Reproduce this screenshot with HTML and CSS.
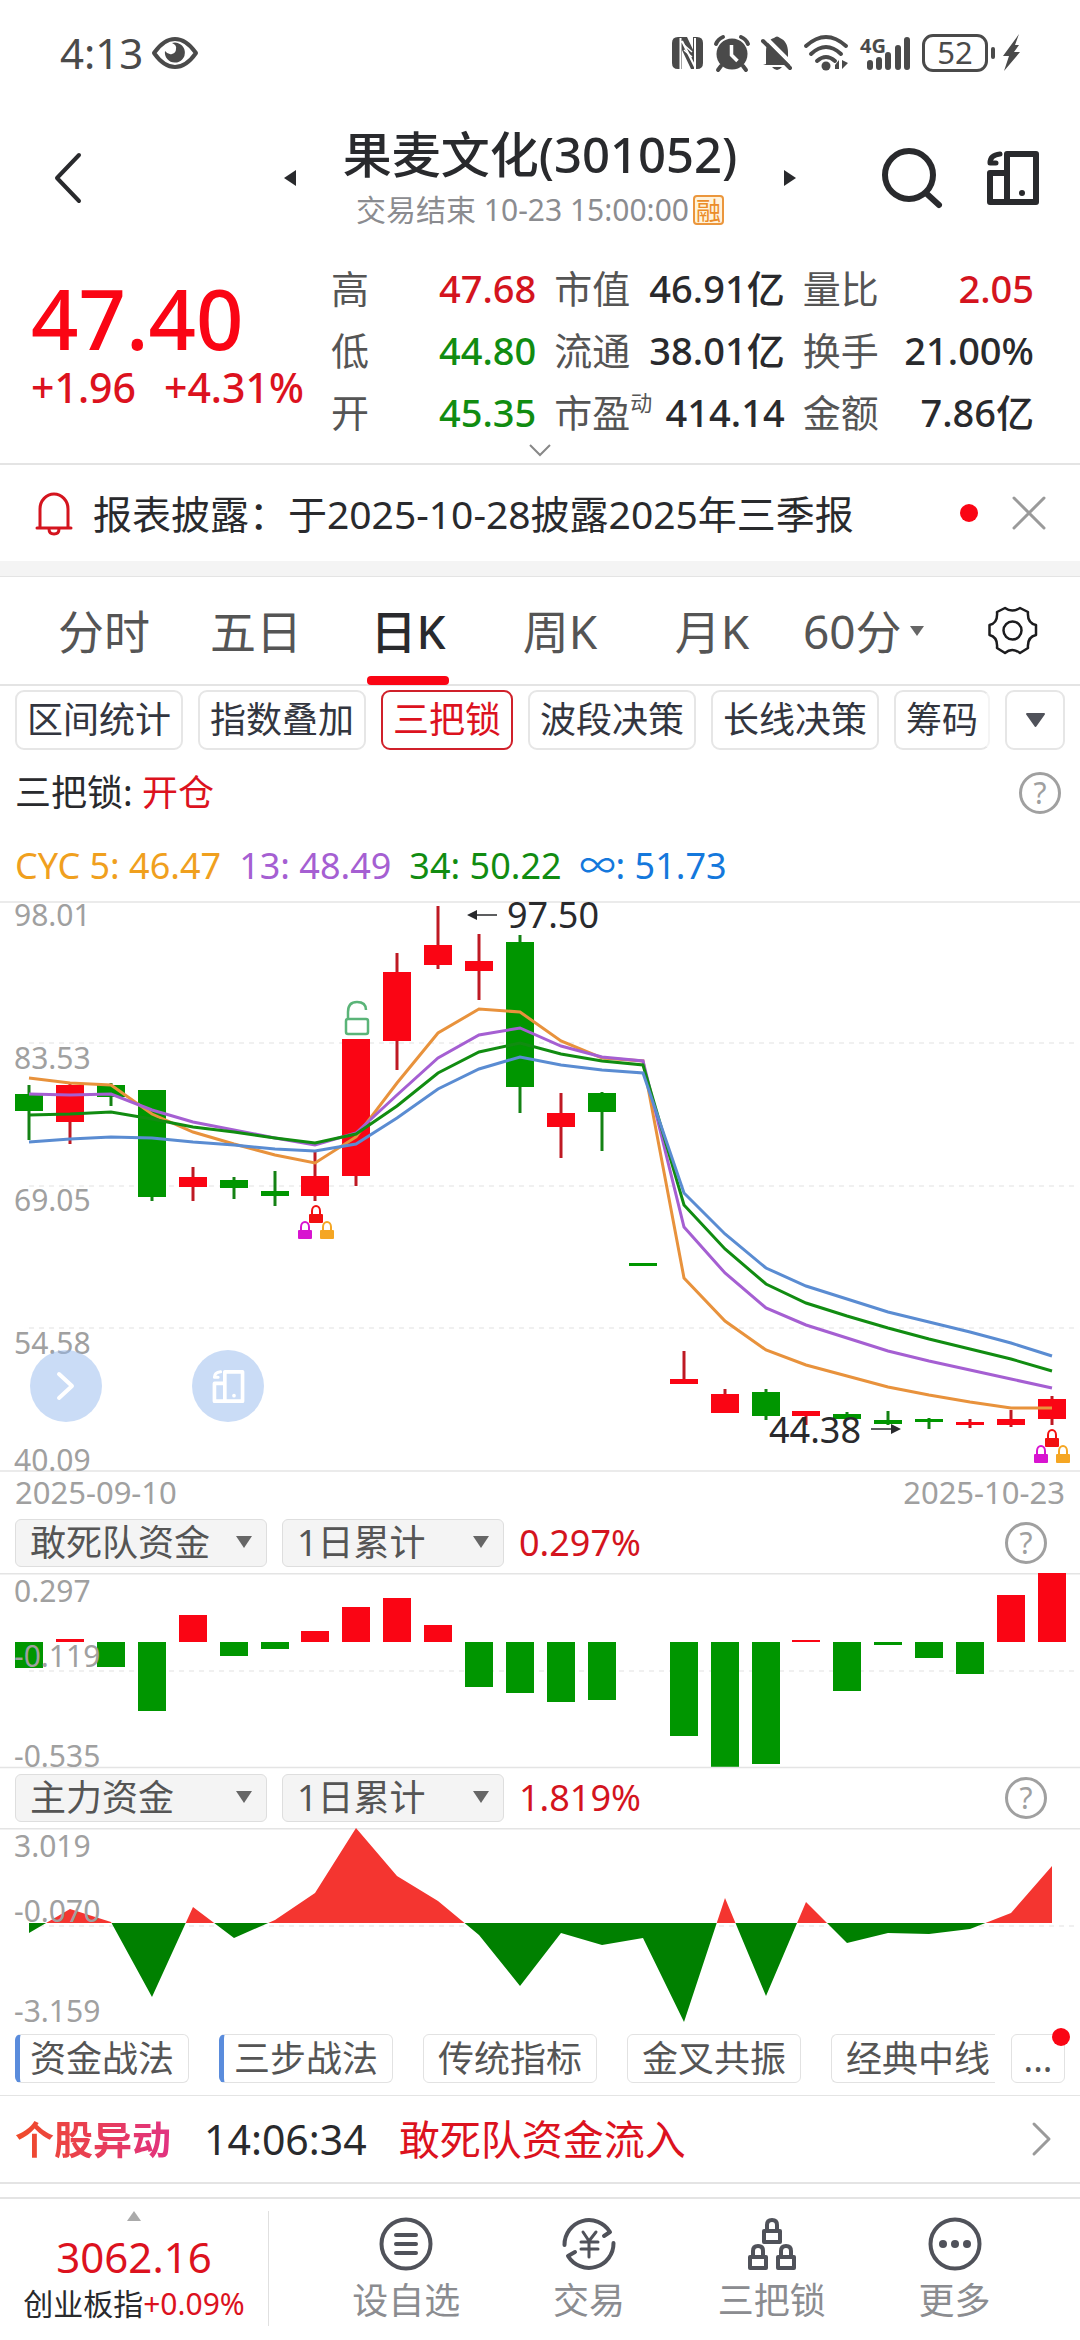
FILE: index.html
```html
<!DOCTYPE html>
<html lang="zh-CN">
<head>
<meta charset="utf-8">
<meta name="viewport" content="width=device-width">
<title>果麦文化(301052)</title>
<link rel="stylesheet" href="styles.css">
</head>
<body>
<div class="status">
  <span class="status-time">4:13</span>
  <svg width="46" height="34" viewBox="0 0 46 34" fill="none" stroke="#4a4a4a" stroke-width="4" stroke-linejoin="round"><path d="M2 17C9 7 15 3 23 3s14 4 21 14C37 27 31 31 23 31S9 27 2 17z"/><path d="M20 7A10 10 0 1 1 13 15Q16 19 20 18T24 13Q25 9 20 7z" fill="#4a4a4a" stroke="none"/></svg>
  <div class="status-icons">
    <svg width="31" height="34" viewBox="0 0 31 34"><path d="M6 1h4v32H6q-6 0-6-6V7q0-6 6-6zM21 1h4q6 0 6 6v20q0 6-6 6h-4zM10 1h5l9 19v13h-5l-9-19z" fill="#4a4a4a"/><path d="M8.500 2v31M10 5l13 26M23 2v31" stroke="#fff" stroke-width="2" fill="none"/><path d="M12 14l8 7M12 9l8 7" stroke="#fff" stroke-width="1.500"/></svg>
    <svg width="36" height="36" viewBox="0 0 36 36"><circle cx="18" cy="19" r="15.500" fill="#4a4a4a"/><path d="M2 9q2-5 7-7M34 9q-2-5-7-7M7 31l-3 4M29 31l3 4" stroke="#4a4a4a" stroke-width="4" stroke-linecap="round" fill="none"/><path d="M17.500 10v10l6 6" stroke="#fff" stroke-width="3.500" fill="none"/></svg>
    <svg width="32" height="36" viewBox="0 0 32 36"><path d="M5 29V17C5 8 9 4 13 3q3-3 6 0c5 2 8 7 8 14v6l2 5v2H2z" fill="#4a4a4a"/><path d="M11 32h10q-5 6-10 0z" fill="#4a4a4a"/><path d="M5 3l28 28" stroke="#fff" stroke-width="4"/><path d="M2 6l27 27" stroke="#4a4a4a" stroke-width="4" stroke-linecap="round"/></svg>
    <svg width="45" height="36" viewBox="0 0 45 36" fill="none" stroke="#4a4a4a" stroke-width="4" stroke-linecap="round"><path d="M2 11Q22-7 42 11M7 19q15-14 30 0M13 26q9-8 18 0"/><circle cx="22" cy="31" r="4.500" fill="#4a4a4a" stroke="none"/><path d="M31 30l4-5v9h-4zM38 25v9l6-6z" fill="#4a4a4a" stroke="none"/></svg>
    <svg width="51" height="36" viewBox="0 0 51 36" stroke="#4a4a4a" stroke-width="6" stroke-linecap="round"><path d="M10 28v4M19 25v7M28 20v12M38 13v19M47 5v27"/><text x="0" y="18" class="net">4G</text></svg>
    <span class="battery">52</span>
    <svg width="17" height="38" viewBox="0 0 17 38"><path d="M16 0L0 22h6L1 37 17 18h-6l5-7h-4z" fill="#4a4a4a"/></svg>
  </div>
</div>

<header class="header">
  <button class="plain back" aria-label="返回"><svg width="28" height="52" viewBox="0 0 28 52" fill="none" stroke="#292a2d" stroke-width="4" stroke-linecap="round" stroke-linejoin="round"><path d="M25 3L3 26l22 23"/></svg></button>
  <div class="switcher">
    <button class="plain" aria-label="上一只"><svg width="13" height="18" viewBox="0 0 13 18"><path d="M12 1v16L0 9z" fill="#292a2d"/></svg></button>
    <div class="titles">
      <h1 class="title">果麦文化(301052)</h1>
      <p class="subtitle">交易结束 10-23 15:00:00<span class="margin-tag">融</span></p>
    </div>
    <button class="plain" aria-label="下一只"><svg width="13" height="18" viewBox="0 0 13 18"><path d="M1 1v16l12-8z" fill="#292a2d"/></svg></button>
  </div>
  <div class="header-tools">
    <button class="plain" aria-label="搜索"><svg width="60" height="60" viewBox="0 0 60 60" fill="none" stroke="#292a2d" stroke-width="6" stroke-linecap="round"><circle cx="27" cy="27" r="24"/><path d="M45 46l12 11"/></svg></button>
    <button class="plain" aria-label="横屏"><svg width="54" height="54" viewBox="0 0 54 54"><use href="#rotate" color="#292a2d"/></svg></button>
  </div>
</header>

<section class="quote">
  <div class="quote-main">
    <div class="price">47.40</div>
    <div class="change"><span>+1.96</span><span>+4.31%</span></div>
  </div>
  <dl class="stats">
    <div class="stat"><dt>高</dt><dd class="up">47.68</dd></div>
    <div class="stat"><dt>市值</dt><dd>46.91亿</dd></div>
    <div class="stat"><dt>量比</dt><dd class="up">2.05</dd></div>
    <div class="stat"><dt>低</dt><dd class="down">44.80</dd></div>
    <div class="stat"><dt>流通</dt><dd>38.01亿</dd></div>
    <div class="stat"><dt>换手</dt><dd>21.00%</dd></div>
    <div class="stat"><dt>开</dt><dd class="down">45.35</dd></div>
    <div class="stat"><dt>市盈<sup>动</sup></dt><dd>414.14</dd></div>
    <div class="stat"><dt>金额</dt><dd>7.86亿</dd></div>
  </dl>
  <button class="plain expand" aria-label="展开"><svg width="22" height="13" viewBox="0 0 22 13" fill="none" stroke="#888" stroke-width="2"><path d="M1 1l10 10L21 1"/></svg></button>
</section>

<section class="notice">
  <svg width="38" height="44" viewBox="0 0 38 44" fill="none" stroke="#d4141e" stroke-width="3" stroke-linecap="round"><path d="M2 37h34M5 36V18a14 15 0 0 1 28 0v18M14 38q0 5 5 5t5-5"/></svg>
  <p class="notice-text">报表披露：于2025-10-28披露2025年三季报</p>
  <span class="dot"></span>
  <button class="plain" aria-label="关闭"><svg width="34" height="34" viewBox="0 0 34 34" stroke="#9a9a9a" stroke-width="3" stroke-linecap="round"><path d="M2 2l30 30M32 2L2 32"/></svg></button>
</section>
<div class="band"></div>

<nav class="tabs">
  <button class="tab">分时</button><button class="tab">五日</button><button class="tab tab-on">日K</button><button class="tab">周K</button><button class="tab">月K</button><button class="tab tab-more">60分</button>
  <button class="plain gear" aria-label="设置"><svg width="49" height="49" viewBox="0 0 49 49" fill="none" stroke="#1c1c1e" stroke-width="2.500" stroke-linejoin="round"><path d="M17 2Q24 7 32 2L40 6Q39 17 48 19V29Q39 31 40 42L32 47Q24 41 17 47L9 42Q10 31 1.500 29V19Q10 17 9 6z"/><circle cx="24.500" cy="24.500" r="9"/></svg></button>
</nav>

<div class="chips">
  <button class="chip">区间统计</button><button class="chip">指数叠加</button><button class="chip chip-on">三把锁</button><button class="chip">波段决策</button><button class="chip">长线决策</button><button class="chip chip-fade">筹码</button>
  <button class="chip chip-more" aria-label="更多指标"><svg width="21" height="16" viewBox="0 0 21 16"><path d="M2 2h17l-8.500 12z" fill="#50525a" stroke="#50525a" stroke-width="2" stroke-linejoin="round"/></svg></button>
</div>
<div class="signal"><span>三把锁: <b class="signal-value">开仓</b></span><button class="help" aria-label="帮助">?</button></div>
<div class="legend"><span class="c5">CYC 5: 46.47</span><span class="c13">13: 48.49</span><span class="c34">34: 50.22</span><span class="cinf">∞: 51.73</span></div>

<section class="kline">
  <svg id="kline" class="plot" viewBox="0 0 1080 571"></svg>
  <button class="float float-next" aria-label="展开面板"><svg width="20" height="30" viewBox="0 0 20 30" fill="none" stroke="#fff" stroke-width="4" stroke-linecap="round" stroke-linejoin="round"><path d="M3 3l13 12L3 27"/></svg></button>
  <button class="float float-rotate" aria-label="横屏"><svg width="33" height="33" viewBox="0 0 54 54"><use href="#rotate" color="#fff"/></svg></button>
</section>
<div class="dates"><span>2025-09-10</span><span>2025-10-23</span></div>

<div class="panel-head">
  <label class="pick pick-wide"><select aria-label="指标"><option>敢死队资金</option></select></label>
  <label class="pick"><select aria-label="周期"><option>1日累计</option></select></label>
  <span class="pick-value">0.297%</span><button class="help" aria-label="帮助">?</button>
</div>
<svg id="bars" class="plot" viewBox="0 0 1080 195"></svg>
<div class="panel-head">
  <label class="pick pick-wide"><select aria-label="指标"><option>主力资金</option></select></label>
  <label class="pick"><select aria-label="周期"><option>1日累计</option></select></label>
  <span class="pick-value">1.819%</span><button class="help" aria-label="帮助">?</button>
</div>
<svg id="area" class="plot" viewBox="0 0 1080 196"></svg>

<div class="tactics">
  <div class="tactic-list">
    <button class="tactic tactic-mark">资金战法</button><button class="tactic tactic-mark">三步战法</button><button class="tactic">传统指标</button><button class="tactic">金叉共振</button><button class="tactic tactic-fade">经典中线</button>
  </div>
  <button class="tactic tactic-more">...<span class="dot badge"></span></button>
</div>

<a class="alert" href="#alert">
  <b class="alert-tag">个股异动</b><span>14:06:34</span><span class="alert-text">敢死队资金流入</span>
  <svg width="20" height="34" viewBox="0 0 20 34" fill="none" stroke="#9a9a9a" stroke-width="3" stroke-linecap="round" stroke-linejoin="round"><path d="M2 2l15 15L2 32"/></svg>
</a>

<footer class="bottom">
  <a class="index" href="#index">
    <svg width="14" height="10" viewBox="0 0 14 10"><path d="M7 0l7 10H0z" fill="#aaa"/></svg>
    <span class="index-value">3062.16</span>
    <span class="index-name">创业板指<span class="index-change">+0.09%</span></span>
  </a>
  <nav class="actions">
    <a class="action" href="#watch"><svg width="54" height="54" viewBox="0 0 54 54" fill="none" stroke="#50525a" stroke-width="4" stroke-linecap="round"><circle cx="27" cy="27" r="24.500"/><path d="M17 18h20M17 27h20M17 36h20"/></svg>设自选</a>
    <a class="action" href="#trade"><svg width="54" height="54" viewBox="0 0 54 54" fill="none" stroke="#50525a" stroke-width="4" stroke-linecap="round" stroke-linejoin="round"><path d="M2.500 28A24.500 24.500 0 0 1 48 15l-6 4M51.500 26A24.500 24.500 0 0 1 6 39l7-4"/><path d="M21 15l6 9 7-9M27 25v15M19 25h17M19 32h17" stroke-width="3"/></svg>交易</a>
    <a class="action" href="#locks"><svg width="54" height="54" viewBox="0 0 54 54" fill="none" stroke="#50525a" stroke-width="4" stroke-linejoin="round"><path d="M19 14h16v11H19zM22 14V8q0-5 5-5t5 5v6M5 40h16v11H5zM8 40v-6q0-5 5-5t5 5v6M33 40h16v11H33zM36 40v-6q0-5 5-5t5 5v6"/></svg>三把锁</a>
    <a class="action" href="#more"><svg width="54" height="54" viewBox="0 0 54 54" fill="#50525a"><circle cx="27" cy="27" r="24.500" fill="none" stroke="#50525a" stroke-width="4"/><circle cx="15" cy="27" r="4"/><circle cx="27" cy="27" r="4"/><circle cx="39" cy="27" r="4"/></svg>更多</a>
  </nav>
</footer>

<svg class="defs" aria-hidden="true"><defs>
  <g id="rotate" fill="none" stroke="currentColor" stroke-width="6" stroke-linejoin="round">
    <path d="M21 3h29v48H21zM21 22H4v29h17"/><circle cx="36" cy="42" r="3" fill="currentColor" stroke="none"/><path d="M14 3Q4 4 4 12h6" stroke-width="5" stroke-linecap="round"/>
  </g>
  <g id="padlock"><rect x="-7" y="9" width="14" height="9" rx="1" fill="currentColor"/><path d="M-4 9V6a4 5 0 0 1 8 0v3" fill="none" stroke="currentColor" stroke-width="2"/></g>
  <g id="locks"><use href="#padlock" color="#f21010"/><use href="#padlock" x="-11" y="16" color="#d814d0"/><use href="#padlock" x="11" y="16" color="#f5a623"/></g>
</defs></svg>
<script src="charts.js"></script>
</body>
</html>
```
FILE: styles.css
```css
* { box-sizing: border-box; }
body {
  margin: 0;
  background: #fff;
  color: #292a2d;
  font-family: "Noto Sans", "Noto Sans CJK SC", sans-serif;
  font-size: 36px;
  line-height: 1;
}
button, select { font: inherit; color: inherit; margin: 0; }
a { color: inherit; text-decoration: none; }
h1, p, dl, dd { margin: 0; font-weight: 400; }
svg { display: block; flex: none; overflow: visible; }
.defs { position: absolute; width: 0; height: 0; }
.plain { border: 0; background: none; padding: 0; }
.up { color: #d4141e; }
.down { color: #118c11; }

.status { display: flex; align-items: center; height: 106px; padding: 0 60px; color: #4a4a4a; }
.status-time { font-size: 42px; margin-right: 9px; }
.status-icons { display: flex; align-items: center; gap: 11px; margin-left: auto; }
.net { font-size: 20px; font-weight: 700; fill: #4a4a4a; stroke: none; }
.battery {
  position: relative;
  width: 66px;
  height: 38px;
  margin-right: 4px;
  border: 3px solid #4a4a4a;
  border-radius: 11px;
  font-size: 31px;
  line-height: 31px;
  text-align: center;
}
.battery::after { content: ""; position: absolute; right: -10px; top: 10px; width: 4px; height: 12px; border-radius: 2px; background: #4a4a4a; }

.header { display: grid; grid-template-columns: 1fr auto 1fr; align-items: center; height: 144px; padding: 0 40px 0 54px; }
.switcher { display: flex; align-items: center; gap: 46px; margin-left: -14px; }
.titles { text-align: center; }
.title { font-size: 49px; line-height: 64px; font-weight: 500; }
.subtitle { display: flex; align-items: center; justify-content: center; gap: 4px; font-size: 30px; line-height: 48px; color: #8b8c90; }
.margin-tag { padding: 0 1px; border: 2px solid #eb963c; border-radius: 4px; font-size: 25px; line-height: 26px; color: #eb8c28; background: #fff3dc; }
.header-tools { display: flex; align-items: center; justify-content: flex-end; gap: 44px; }

.quote { display: grid; grid-template-columns: 300px 1fr; padding: 7px 46px 0 31px; border-bottom: 2px solid #e4e4e4; }
.quote-main { padding-top: 18px; white-space: nowrap; }
.price { font-size: 83px; line-height: 86px; font-weight: 500; color: #fa0514; }
.change { display: flex; gap: 28px; font-size: 41px; line-height: 52px; font-weight: 500; color: #dc121e; }
.stats { display: grid; grid-template-columns: 205fr 230fr 231fr; column-gap: 18px; font-size: 38px; line-height: 62px; }
.stat { display: flex; justify-content: space-between; height: 62px; white-space: nowrap; }
.stat dt { color: #555; }
.stat dd { font-weight: 500; }
.stat sup { font-size: 22px; line-height: 1; vertical-align: 16px; }
.expand { grid-column: 1 / -1; justify-self: center; padding: 1px 0 6px; margin-left: 14px; }

.notice { display: flex; align-items: center; height: 96px; padding: 0 34px 0 35px; }
.notice-text { flex: 1; margin-left: 20px; font-size: 39px; white-space: nowrap; }
.dot { width: 18px; height: 18px; border-radius: 50%; background: #fa0514; }
.notice .dot { margin-right: 34px; }
.band { height: 16px; background: #f4f4f4; border-bottom: 1px solid #e4e4e4; }

.tabs { display: flex; align-items: center; height: 109px; padding: 0 43px 0 28px; border-bottom: 2px solid #e4e4e4; }
.tab { position: relative; width: 152px; height: 100%; border: 0; padding: 0; background: none; font-size: 46px; color: #555; white-space: nowrap; }
.tab-on { color: #292a2d; font-weight: 500; }
.tab-on::after { content: ""; position: absolute; left: 50%; bottom: -1px; width: 82px; height: 9px; margin-left: -41px; border-radius: 4px; background: #fa0514; }
.tab-more { display: flex; align-items: center; gap: 8px; width: auto; margin-left: 15px; }
.tab-more::after, .pick::after { content: ""; border: 8px solid transparent; border-top: 12px solid #666; border-bottom: 0; }
.tab-more::after { border-width: 10px 7px 0; }
.gear { margin-left: auto; }

.chips { display: flex; gap: 15px; padding: 4px 15px 0 15px; }
.chip { height: 60px; padding: 0 10px; border: 2px solid #e6e6e6; border-radius: 9px; background: #fff; color: #33363f; white-space: nowrap; }
.chip-on { border-color: #d0202a; color: #dc121e; }
.chip-fade { border-right-color: #f4f4f4; }
.chip-more { display: grid; place-items: center; width: 60px; margin-left: auto; }

.signal { display: flex; align-items: center; justify-content: space-between; height: 86px; padding: 0 19px 0 15px; }
.signal-value { font-weight: 400; color: #dc121e; }
.help { width: 42px; height: 42px; padding: 0; border: 3px solid #a0a0a0; border-radius: 50%; background: none; font-size: 30px; line-height: 36px; color: #a0a0a0; }
.legend { display: flex; gap: 18px; height: 65px; padding: 0 15px; line-height: 60px; white-space: nowrap; }
.c5 { color: #f0a01e; }
.c13 { color: #a55fd2; }
.c34 { color: #118c11; }
.cinf { color: #1478dc; }

.kline { position: relative; }
.plot { width: 100%; height: auto; }
.axis { font-size: 30px; fill: #a0a0a0; }
.mark { font-size: 36px; fill: #292a2d; }
.float { position: absolute; bottom: 50px; display: grid; place-items: center; width: 72px; height: 72px; padding: 0; border: 0; border-radius: 50%; background: rgba(150, 185, 238, .5); }
.float-next { left: 30px; }
.float-rotate { left: 192px; }
.dates { display: flex; justify-content: space-between; padding: 0 15px; font-size: 31px; line-height: 41px; color: #a0a0a0; }

.panel-head { display: flex; align-items: center; height: 60px; padding: 0 33px 0 15px; }
.pick { position: relative; display: flex; width: 222px; height: 48px; margin-right: 15px; }
.pick-wide { width: 252px; }
.pick select { width: 100%; padding: 0 14px; border: 1px solid #dedede; border-radius: 6px; background: #f4f4f4; color: #555; appearance: none; line-height: 44px; }
.pick::after { position: absolute; right: 15px; top: 17px; }
.pick-value { color: #d4141e; }
.panel-head .help { margin-left: auto; }

.tactics { display: flex; gap: 16px; padding: 10px 15px 12px; border-bottom: 1px solid #e4e4e4; }
.tactic-list { display: flex; flex: 1; min-width: 0; gap: 30px; overflow: hidden; }
.tactic { flex: none; height: 49px; padding: 0 14px; border: 1px solid #e2e2e2; border-radius: 6px; background: #fff; color: #555; white-space: nowrap; }
.tactic-mark { padding-left: 10px; border-left: 5px solid #5a8cdc; }
.tactic-fade { border-right: 0; }
.tactic-more { position: relative; width: 54px; padding: 0; }
.badge { position: absolute; right: -6px; top: -7px; }

.alert { display: flex; align-items: center; height: 88px; padding: 0 28px 0 15px; border-bottom: 2px solid #e4e4e4; font-size: 41px; line-height: 54px; }
.alert-tag { margin-right: 33px; font-size: 39px; background: linear-gradient(90deg, #f04b28, #e13282); background-clip: text; -webkit-background-clip: text; color: transparent; }
.alert-text { margin-left: 32px; color: #dc121e; }
.alert svg { margin-left: auto; }

.bottom { display: flex; margin-top: 13px; height: 143px; border-top: 2px solid #e4e4e4; }
.index { display: flex; flex-direction: column; align-items: center; width: 269px; margin: 12px 0 14px; border-right: 1px solid #e0e0e0; white-space: nowrap; }
.index-value { margin-top: 6px; font-size: 42px; line-height: 60px; color: #dc121e; }
.index-name { font-size: 30px; line-height: 34px; }
.index-change { color: #dc121e; }
.actions { display: grid; flex: 1; grid-template-columns: repeat(4, 1fr); padding: 18px 34px 0 46px; color: #8b8c90; }
.action { display: flex; flex-direction: column; align-items: center; gap: 12px; }
```
FILE: charts.js
```js
const RED = '#fa0514', GREEN = '#009600';
const FIRST = 29, STEP = 40.92, HALF = 14;
const cx = i => Math.round(FIRST + STEP * i);
const line = (x1, y1, x2, y2, attrs) => `<line x1="${x1}" y1="${y1}" x2="${x2}" y2="${y2}" ${attrs}/>`;
const rule = y => line(0, y, 1080, y, 'stroke="#e4e4e4" stroke-width="1.5"');
const grid = y => line(29, y, 1075, y, 'stroke="#f0f0f0" stroke-width="2" stroke-dasharray="5 5"');
const label = (y, t) => `<text class="axis" x="14" y="${y}">${t}</text>`;

// Candles: direction, high, body top, body bottom, low
const candles = [
  ['d',184,193,210,239],['u',183,184,221,243],['d',182,184,196,205],['d',189,189,296,300],
  ['u',266,276,286,300],['d',276,279,287,298],['d',270,290,295,305],['u',250,275,295,300],
  ['u',138,138,275,285],['u',52,71,140,169],['u',5,44,64,68],['u',33,60,70,99],
  ['d',34,41,186,212],['u',192,212,226,257],['d',191,192,211,250],['d',362,362,365,365],
  ['u',450,478,483,483],['u',488,493,512,512],['d',488,491,515,519],['u',510,510,515,524],
  ['d',511,513,518,519],['d',510,519,523,524],['d',517,518,521,528],['u',518,521,524,527],
  ['u',509,518,524,526],['u',495,498,518,524]
];
const averages = [
  ['#e8923c',[177,182,184,213,231,243,254,262,236,182,132,108,111,140,157,160,377,420,449,464,475,486,494,501,507,507]],
  ['#a55fd2',[193,194,193,209,221,229,237,244,232,194,157,134,127,145,156,160,326,372,407,424,437,450,460,469,478,487]],
  ['#118c11',[214,213,211,218,226,231,237,242,233,205,172,151,142,153,160,164,304,348,383,402,415,427,438,448,458,470]],
  ['#5a8cd2',[241,238,236,237,241,244,248,250,243,217,188,168,156,164,169,172,292,333,367,385,398,411,421,431,442,455]]
];
let k = rule(1) + rule(570) + grid(142) + grid(285) + grid(427);
candles.forEach(([dir, high, top, bottom, low], i) => {
  const wick = dir === 'u' ? '#be1923' : '#148214';
  k += line(cx(i), high, cx(i), low, `stroke="${wick}" stroke-width="3"`);
  k += `<rect x="${cx(i) - HALF}" y="${top}" width="${HALF * 2}" height="${bottom - top}" fill="${dir === 'u' ? RED : GREEN}"/>`;
});
averages.forEach(([color, ys]) => {
  k += `<polyline fill="none" stroke="${color}" stroke-width="3" points="${ys.map((y, i) => cx(i) + ',' + y).join(' ')}"/>`;
});
k += label(25, '98.01') + label(168, '83.53') + label(310, '69.05') + label(453, '54.58') + label(570, '40.09');
k += '<text class="mark" x="507" y="27">97.50</text><text class="mark" x="769" y="542">44.38</text>';
k += '<path d="M497 14H472M871 528h25" stroke="#292a2d" stroke-width="1.500"/><path d="M467 14l10-5v10zM901 528l-10-5v10z" fill="#292a2d"/>';
k += '<path d="M348 117v-6q0-10 9-10t9 8" fill="none" stroke="#5ab478" stroke-width="2.500"/><rect x="346" y="118" width="22" height="15" rx="2" fill="none" stroke="#5ab478" stroke-width="2.500"/>';
k += '<use href="#locks" x="316" y="304"/><use href="#locks" x="1052" y="528"/>';
document.getElementById('kline').innerHTML = k;

// Daily fund flow: bar ends measured against the zero line
const ZERO = 69;
const flow = [95,66,94,138,42,83,76,58,34,25,52,114,120,129,127,69,163,194,191,67,118,72,85,101,22,0];
let b = rule(0.75) + grid(98);
flow.forEach((y, i) => {
  b += `<rect x="${cx(i) - HALF}" y="${Math.min(y, ZERO)}" width="${HALF * 2}" height="${Math.abs(y - ZERO)}" fill="${y < ZERO ? RED : GREEN}"/>`;
});
b += rule(194.5) + label(29, '0.297') + label(94, '-0.119') + label(194, '-0.535');
document.getElementById('bars').innerHTML = b;

// Main fund flow: one outline, split in two colours at its zero line
const BASE = 95;
const main = [105,81,94,169,79,110,92,65,0,48,73,107,158,105,117,110,194,70,168,74,115,105,106,101,85,38];
const outline = `${cx(0)},${BASE} ${main.map((y, i) => cx(i) + ',' + y).join(' ')} ${cx(25)},${BASE}`;
document.getElementById('area').innerHTML = rule(0.75) + grid(98) +
  `<clipPath id="above"><rect width="1080" height="${BASE}"/></clipPath><clipPath id="below"><rect y="${BASE}" width="1080" height="101"/></clipPath>` +
  `<polygon points="${outline}" fill="#f43530" clip-path="url(#above)"/><polygon points="${outline}" fill="#008000" clip-path="url(#below)"/>` +
  label(29, '3.019') + label(94, '-0.070') + label(194, '-3.159');
```
